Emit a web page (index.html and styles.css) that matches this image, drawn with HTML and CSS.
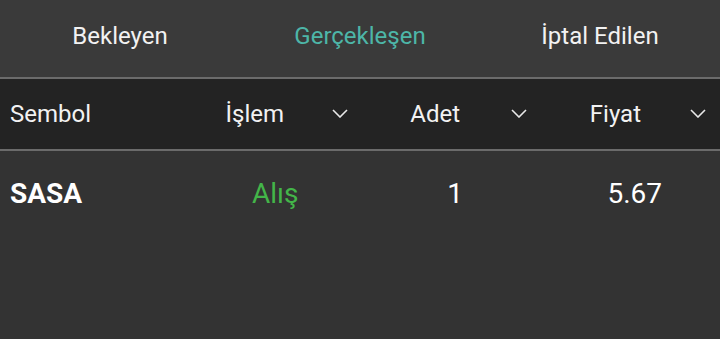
FILE: index.html
```html
<!DOCTYPE html>
<html>
<head>
<meta charset="utf-8">
<link rel="stylesheet" href="styles.css">
</head>
<body>
<div class="screen">
  <div class="tabs">
    <div class="tab">Bekleyen</div>
    <div class="tab tab-active">Gerçekleşen</div>
    <div class="tab">İptal Edilen</div>
  </div>
  <div class="head">
    <div class="hcell hcell-first">Sembol</div>
    <div class="hcell hcell-sort hcell-side"><span class="label">İşlem</span><svg class="chev" viewBox="0 0 16 9"><path d="M1 1 L8 8 L15 1" /></svg></div>
    <div class="hcell hcell-sort hcell-qty"><span class="label">Adet</span><svg class="chev" viewBox="0 0 16 9"><path d="M1 1 L8 8 L15 1" /></svg></div>
    <div class="hcell hcell-sort hcell-price"><span class="label">Fiyat</span><svg class="chev" viewBox="0 0 16 9"><path d="M1 1 L8 8 L15 1" /></svg></div>
  </div>
  <div class="row">
    <div class="cell cell-symbol">SASA</div>
    <div class="cell cell-side">Alış</div>
    <div class="cell cell-qty">1</div>
    <div class="cell cell-price">5.67</div>
  </div>
</div>
</body>
</html>
```
FILE: styles.css
```css
html, body {
  margin: 0;
  padding: 0;
}
body {
  width: 720px;
  height: 339px;
  background: #333333;
  font-family: Roboto, "Noto Sans", sans-serif;
  color: #ffffff;
  overflow: hidden;
}
.screen {
  display: flex;
  flex-direction: column;
}
.tabs {
  display: grid;
  grid-template-columns: repeat(3, 1fr);
  height: 77px;
  background: #3a3a3a;
  border-bottom: 2px solid #6b6b6b;
}
.tab {
  display: flex;
  align-items: center;
  justify-content: center;
  font-size: 24px;
  padding-bottom: 6px;
  color: #f2f2f2;
}
.tab-active {
  color: #4db6a8;
}
.head {
  display: grid;
  grid-template-columns: repeat(4, 1fr);
  height: 70px;
  background: #232323;
  border-bottom: 2px solid #6b6b6b;
}
.hcell {
  display: flex;
  align-items: center;
  font-size: 24px;
  color: #f2f2f2;
}
.hcell-first {
  padding-left: 10px;
}
.hcell-sort {
  justify-content: flex-end;
  padding-right: 12px;
}
.label {
  margin-right: 48px;
}
.hcell-qty {
  padding-right: 13px;
}
.hcell-qty .label {
  margin-right: 51px;
}
.hcell-price {
  padding-right: 14px;
}
.hcell-price .label {
  margin-right: 49px;
}
.chev {
  width: 16px;
  height: 9px;
  fill: none;
  stroke: #e8e8e8;
  stroke-width: 1.6;
  margin-top: -2px;
}
.row {
  display: grid;
  grid-template-columns: repeat(4, 1fr);
  height: 84px;
  align-items: center;
}
.cell {
  font-size: 28px;
  color: #ffffff;
}
.cell-symbol {
  padding-left: 10px;
  font-weight: bold;
}
.cell-side {
  padding-left: 72px;
  color: #43b549;
}
.cell-qty {
  text-align: right;
  padding-right: 77px;
}
.cell-price {
  text-align: right;
  padding-right: 58px;
}
```
